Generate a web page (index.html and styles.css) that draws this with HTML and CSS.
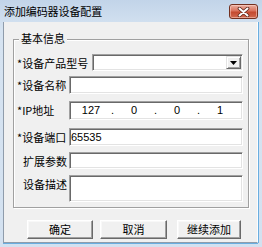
FILE: index.html
```html
<!DOCTYPE html>
<html>
<head>
<meta charset="utf-8">
<link rel="stylesheet" href="styles.css">
</head>
<body>
<div class="window">
  <div class="titlebar">
    <span class="title">添加编码器设备配置</span>
    <span class="close">
      <svg width="13" height="10" viewBox="0 0 13 10">
        <path d="M2.5 1.5 L10.5 8.5 M10.5 1.5 L2.5 8.5" stroke="#5a2418" stroke-width="3.6" stroke-linecap="round"/>
        <path d="M2.5 1.5 L10.5 8.5 M10.5 1.5 L2.5 8.5" stroke="#ffffff" stroke-width="2" stroke-linecap="round"/>
      </svg>
    </span>
  </div>
  <div class="client">
    <div class="group">
      <span class="legend">基本信息</span>
      <div class="row r1">
        <span class="label wide">*设备产品型号</span>
        <div class="combo">
          <div class="combo-field"></div>
          <div class="combo-btn">
            <svg width="7" height="4" viewBox="0 0 7 4"><path d="M0 0 H7 L3.5 4 Z" fill="#000"/></svg>
          </div>
        </div>
      </div>
      <div class="row r2">
        <span class="label">*设备名称</span>
        <div class="edit h18"></div>
      </div>
      <div class="row r3">
        <span class="label">*IP地址</span>
        <div class="edit ip h19">
          <span class="seg">127</span><span class="dot">.</span><span class="seg">0</span><span class="dot">.</span><span class="seg">0</span><span class="dot">.</span><span class="seg">1</span>
        </div>
      </div>
      <div class="row r4">
        <span class="label">*设备端口</span>
        <div class="edit h18 num">65535</div>
      </div>
      <div class="row r5">
        <span class="label indent">扩展参数</span>
        <div class="edit h17"></div>
      </div>
      <div class="row r6">
        <span class="label indent">设备描述</span>
        <div class="edit h27"></div>
      </div>
    </div>
    <div class="buttons">
      <button class="btn b1">确定</button>
      <button class="btn b2">取消</button>
      <button class="btn b3">继续添加</button>
    </div>
  </div>
</div>
</body>
</html>
```

FILE: styles.css
```css
html, body {
  margin: 0;
  padding: 0;
}
body {
  width: 262px;
  height: 247px;
  overflow: hidden;
  font-family: "Noto Sans CJK SC", "Liberation Sans", sans-serif;
  font-size: 11px;
  color: #000;
  background: #d3e1f0;
}
.window {
  width: 262px;
  height: 247px;
  display: flex;
  flex-direction: column;
  background: linear-gradient(#c2d4e9, #d6e3f1 30px, #d3e1f0);
}
.titlebar {
  height: 22px;
  flex: none;
  display: flex;
  justify-content: space-between;
  align-items: flex-start;
}
.title {
  padding-left: 4px;
  line-height: 22px;
  letter-spacing: -0.1px;
}
.close {
  margin-top: 4px;
  margin-right: 4px;
  width: 29px;
  height: 15px;
  box-sizing: border-box;
  border: 1px solid #73301f;
  border-radius: 3px;
  background: linear-gradient(#eab0a2, #d9725c 45%, #c44a30 55%, #d0694f);
  box-shadow: inset 0 0 0 1px rgba(255, 220, 210, 0.5);
  display: flex;
  align-items: center;
  justify-content: center;
}
.close svg {
  display: block;
}
.client {
  flex: 1;
  margin: 0 4px 4px 3px;
  background: #f0f0f0;
  border-left: 1px solid #8f9cab;
  border-bottom: 1px solid #8f9cab;
  border-right: 1px solid #fbfdff;
  box-shadow: 1px 0 0 #6aaee0, 0 1px 0 #6aaee0;
  display: flex;
  flex-direction: column;
}
.group {
  position: relative;
  margin-top: 17px;
  margin-left: 9px;
  width: 236px;
  box-sizing: border-box;
  border: 1px solid #a0a0a0;
  box-shadow: inset 1px 1px 0 #fff, 1px 1px 0 #fff;
  padding: 14px 5px 5px 3px;
}
.legend {
  position: absolute;
  top: -8px;
  left: 5px;
  padding: 0 2px;
  line-height: 13px;
  background: #f0f0f0;
}
.row {
  display: flex;
  align-items: flex-start;
}
.r1 { height: 22px; }
.r2 { height: 25px; }
.r3 { height: 27px; }
.r4 { height: 24px; }
.r5 { height: 23px; }
.r6 { height: 27px; }
.label {
  flex: none;
  width: 52px;
  height: 18px;
  line-height: 18px;
  white-space: nowrap;
}
.label.wide {
  width: 75px;
}
.label.indent {
  width: 46px;
  padding-left: 6px;
}
.edit {
  flex: 1;
  box-sizing: border-box;
  background: #fff;
  border: 1px solid;
  border-color: #a0a0a0 #ffffff #ffffff #a0a0a0;
  box-shadow: inset 1px 1px 0 #696969, inset -1px -1px 0 #e3e3e3;
}
.h17 { height: 17px; }
.h18 { height: 18px; }
.h19 { height: 19px; }
.h27 { height: 27px; }
.num {
  font-family: "Liberation Sans", sans-serif;
  font-size: 11px;
  line-height: 16px;
  padding-left: 1px;
}
.ip {
  display: flex;
  padding: 0 1px;
  font-family: "Liberation Sans", sans-serif;
  font-size: 11px;
  line-height: 17px;
}
.seg {
  width: 40px;
  text-align: center;
}
.dot {
  width: 3px;
  text-align: center;
}
.combo {
  flex: 1;
  height: 17px;
  box-sizing: border-box;
  background: #fff;
  border: 1px solid;
  border-color: #a0a0a0 #ffffff #ffffff #a0a0a0;
  box-shadow: inset 1px 1px 0 #696969, inset -1px -1px 0 #e3e3e3;
  padding: 1px;
  display: flex;
}
.combo-field {
  flex: 1;
}
.combo-btn {
  width: 15px;
  box-sizing: border-box;
  background: #f0f0f0;
  border: 1px solid;
  border-color: #e3e3e3 #696969 #696969 #e3e3e3;
  box-shadow: inset 1px 1px 0 #fff, inset -1px -1px 0 #a0a0a0;
  display: flex;
  align-items: center;
  justify-content: center;
}
.combo-btn svg {
  display: block;
}
.buttons {
  display: flex;
  margin-top: 12px;
  padding-left: 23px;
}
.btn {
  height: 19px;
  box-sizing: border-box;
  padding: 0;
  margin: 0;
  font-family: "Noto Sans CJK SC", "Liberation Sans", sans-serif;
  font-size: 11px;
  line-height: 15px;
  color: #000;
  background: #f0f0f0;
  border: 1px solid;
  border-color: #ffffff #696969 #696969 #ffffff;
  box-shadow: inset -1px -1px 0 #a0a0a0, inset 1px 1px 0 #f8f8f8;
}
.b1 { width: 66px; }
.b2 { width: 67px; margin-left: 7px; }
.b3 { width: 64px; margin-left: 10px; }
```
